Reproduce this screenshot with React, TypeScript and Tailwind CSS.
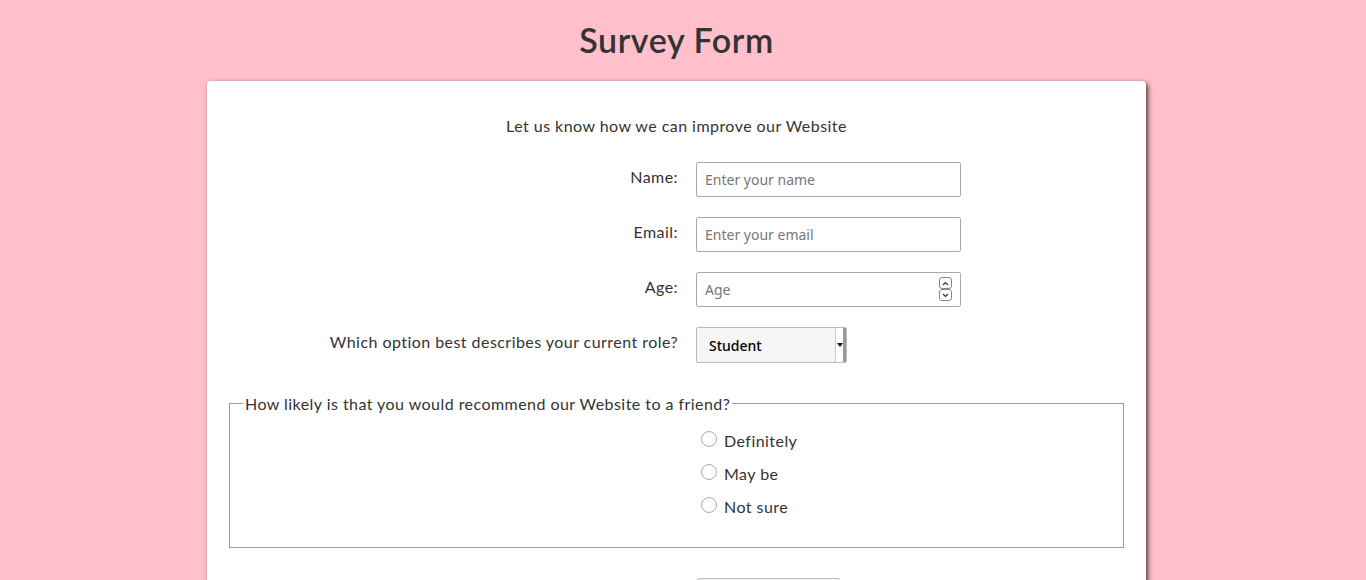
import React from 'react';

const labelFont = { fontFamily: 'Lato, "Open Sans", sans-serif' };
const fieldFont = { fontFamily: '"Noto Sans", "Open Sans", sans-serif' };

const Row: React.FC<{ label: string; children: React.ReactNode }> = ({ label, children }) => (
  <div className="flex items-start">
    <label className="w-[451px] shrink-0 pt-[5px] text-right text-[16px] leading-[20px] tracking-[0.45px] text-[#333]">{label}</label>
    <div className="ml-[18px]">{children}</div>
  </div>
);

const inputCls =
  'h-[35px] w-[265px] rounded-[2px] border border-[#aaa] bg-white px-[8px] text-[14px] text-[#333] outline-none placeholder:text-[#777]';

export default function App() {
  const options = ['Definitely', 'May be', 'Not sure'];

  return (
    <div className="min-h-[580px] bg-[#ffc0cb] pr-[13px]" style={labelFont}>
      <h1 className="pt-[21px] text-center text-[34px] font-semibold leading-[38px] tracking-[0.6px] text-[#333]">Survey Form</h1>

      <div className="mx-auto mt-[22px] w-[939px] rounded-[4px] bg-white px-[20px] pt-[35px] pb-[40px] shadow-[2px_2px_5px_rgba(0,0,0,0.7)]">
        <p className="text-center text-[16px] leading-[20px] tracking-[0.45px] text-[#333]">Let us know how we can improve our Website</p>

        <form className="mt-[26px] flex flex-col gap-[20px]">
          <Row label="Name:">
            <input type="text" placeholder="Enter your name" className={inputCls} style={fieldFont} />
          </Row>
          <Row label="Email:">
            <input type="email" placeholder="Enter your email" className={inputCls} style={fieldFont} />
          </Row>
          <Row label="Age:">
            <div className="relative">
              <input
                type="number"
                placeholder="Age"
                className={`${inputCls} [appearance:textfield] [&::-webkit-inner-spin-button]:appearance-none [&::-webkit-outer-spin-button]:appearance-none`}
                style={fieldFont}
              />
              <div className="pointer-events-none absolute top-[5px] right-[9px] flex flex-col">
                <span className="flex h-[12px] w-[13px] items-center justify-center rounded-[3px] border border-[#888]">
                  <svg width="7" height="5" viewBox="0 0 7 5"><path d="M1 4 L3.5 1.5 L6 4" fill="none" stroke="#333" strokeWidth="1.2" /></svg>
                </span>
                <span className="flex h-[12px] w-[13px] items-center justify-center rounded-[3px] border border-[#888]">
                  <svg width="7" height="5" viewBox="0 0 7 5"><path d="M1 1 L3.5 3.5 L6 1" fill="none" stroke="#333" strokeWidth="1.2" /></svg>
                </span>
              </div>
            </div>
          </Row>
          <Row label="Which option best describes your current role?">
            <div className="relative w-[151px]">
              <select
                defaultValue="Student"
                className="h-[36px] w-[151px] appearance-none rounded-[2px] border border-[#bbb] bg-[#f6f6f6] pl-[12px] text-[14px] font-medium text-black outline-none"
                style={fieldFont}
              >
                <option>Student</option>
                <option>Full Time Job</option>
                <option>Full Time Learner</option>
                <option>Prefer not to say</option>
                <option>Other</option>
              </select>
              <div className="pointer-events-none absolute top-[1px] right-[1px] flex h-[34px] w-[11px] items-center justify-center border-l border-[#ccc] border-r-[3px] border-r-[#999] bg-white">
                <svg width="6" height="4" viewBox="0 0 6 4"><path d="M0 0 H6 L3 4 Z" fill="#111" /></svg>
              </div>
            </div>
          </Row>

          <fieldset className="mx-[2px] mt-[11px] border border-[#999] px-[13px] pb-[30px]">
            <legend className="px-[2px] text-[16px] leading-[19px] tracking-[0.45px] text-[#333]">
              How likely is that you would recommend our Website to a friend?
            </legend>
            <div className="mt-[18px] ml-[452px] flex flex-col gap-[13px]">
              {options.map(o => (
                <label key={o} className="flex items-center text-[16px] leading-[20px] tracking-[0.45px] text-[#333]">
                  <input
                    type="radio"
                    name="recommend"
                    className="mr-[7px] ml-[6px] h-[16px] w-[16px] -translate-y-[2px] appearance-none rounded-full border border-[#aaa] bg-white"
                  />
                  {o}
                </label>
              ))}
            </div>
          </fieldset>

          <div className="mt-[10px] flex">
            <div className="w-[451px] shrink-0" />
            <button type="button" className="ml-[19px] h-[36px] w-[143px] rounded-[2px] border border-[#bbb] bg-[#f6f6f6] text-[14px] text-black" style={fieldFont}>
              Submit
            </button>
          </div>
        </form>
      </div>
    </div>
  );
}
